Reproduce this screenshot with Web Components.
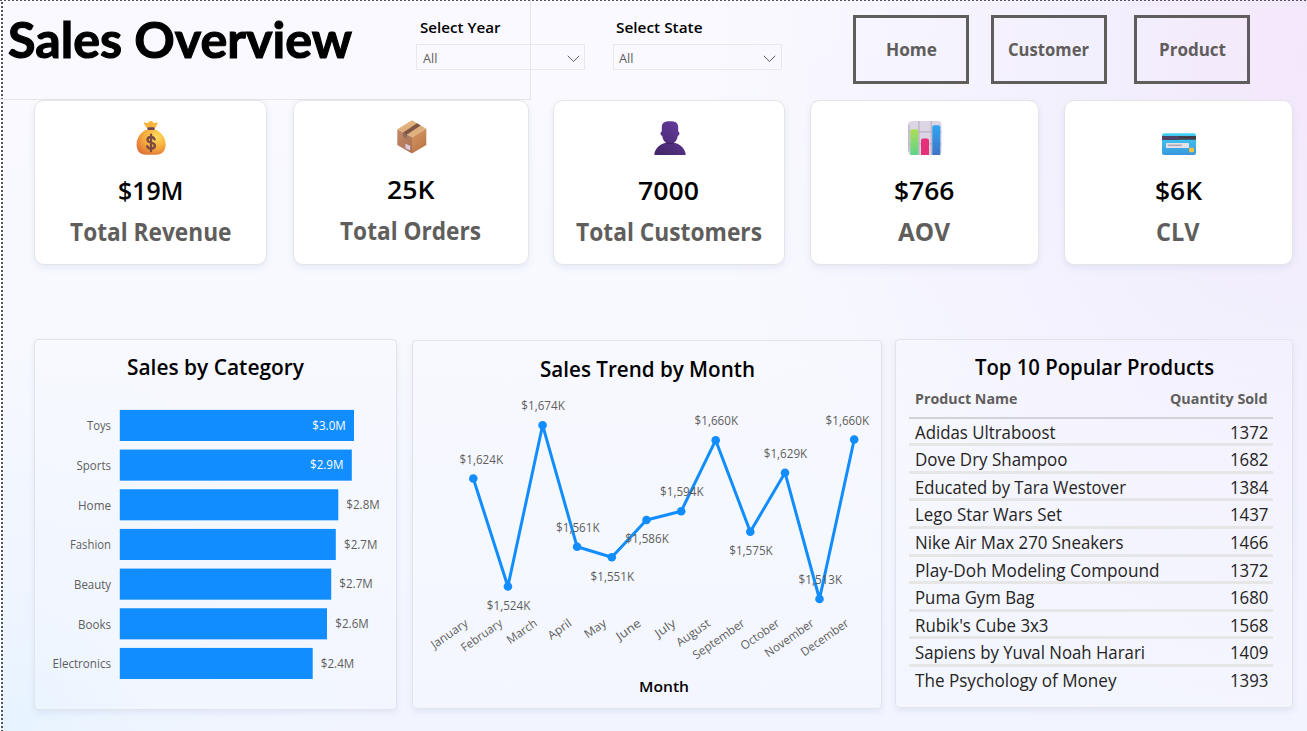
<!DOCTYPE html>
<html lang="en">
<head>
<meta charset="utf-8">
<title>Sales Overview</title>
<style>
html,body{margin:0;padding:0}
body{width:1307px;height:731px;overflow:hidden;font-family:"Open Sans","Noto Sans",sans-serif}
</style>
</head>
<body>
<sales-dashboard></sales-dashboard>
<script>
const define = (name, cls) => customElements.define(name, cls);
class Base extends HTMLElement {
  connectedCallback() {
    if (this.shadowRoot) return;
    this.attachShadow({ mode: 'open' }).innerHTML = this.render();
    if (this.ready) this.ready();
  }
  a(n, d = '') { return this.getAttribute(n) ?? d; }
}

/* One line of text condensed or expanded to a given advance width. */
define('fit-text', class extends Base {
  render() {
    return `<style>:host{display:inline-block;white-space:nowrap;width:${this.a('w')}px}
    span{display:inline-block;transform-origin:0 50%}</style><span><slot></slot></span>`;
  }
  ready() {
    const s = this.shadowRoot.querySelector('span');
    const n = s.getBoundingClientRect().width;
    if (n) s.style.transform = `scaleX(${this.a('w') / n})`;
  }
});

define('page-title', class extends Base {
  render() {
    return `<style>:host{display:block;box-sizing:border-box;width:531px;height:100px;margin-right:-115px;padding-left:7.500px;
      border-right:1px solid #e6e6e9;border-bottom:1px solid #e6e6e9;font:700 49px/60px Lato,sans-serif;-webkit-text-stroke:1.100px #000;color:#000;padding-top:9px}</style>
      <fit-text w="344"><slot></slot></fit-text>`;
  }
});

define('filter-select', class extends Base {
  render() {
    return `<style>:host{display:block;width:169px;padding-top:17px;color:#000}
    .l{font-size:15px;font-weight:600;line-height:21px;height:27px;padding-left:3.500px}
    .b{box-sizing:border-box;height:26px;border:1px solid #e9e9ec;display:flex;align-items:center;justify-content:space-between;padding:4px 4.500px 0 5.500px;
      font-size:12px;line-height:20px;color:#605e5c}
    svg{display:block;margin-top:-1px}</style>
    <div class="l"><fit-text w="${this.a('w')}"><slot></slot></fit-text></div>
    <div class="b"><fit-text w="14.5">${this.a('value')}</fit-text>
    <svg width="13" height="8" viewBox="0 0 13 8"><path d="M.8.8 6.5 6.6 12.2.8" fill="none" stroke="#605e5c" stroke-width="1"/></svg></div>`;
  }
});

define('nav-button', class extends Base {
  render() {
    return `<style>:host{display:flex;box-sizing:border-box;width:116px;height:69px;margin-top:14.5px;padding-top:2px;border:3px solid #605e5c;align-items:center;justify-content:center;
      font-size:17.3px;font-weight:700;line-height:24px;color:#605e5c}</style><fit-text w="${this.a('w')}"><slot></slot></fit-text>`;
  }
});

const ICONS = {
  bag: `<defs><radialGradient id="g" cx=".68" cy=".28" r=".85"><stop offset="0" stop-color="#ffdc5e"/><stop offset=".5" stop-color="#f7ac3c"/><stop offset="1" stop-color="#dc6c38"/></radialGradient></defs>
    <path d="M12.3 6.8 10 2.6c-.5-1 .4-1.5 1.3-1.1l2 .8L15.9.3c.7-.5 1.4-.5 2 0l2.4 2 2.2-.8c1-.3 1.7.3 1.2 1.2l-2.4 4.1z" fill="#f9b53c"/>
    <path d="M12.2 8.8C6.8 11.4 2.600 17 2.600 23.300c0 7 3.500 10.500 9.500 10.500h10c6 0 9.500-3.600 9.500-10.500 0-6.300-4.300-12-9.800-14.500z" fill="url(#g)"/>
    <rect x="13.300" y="6.200" width="7.500" height="2.800" rx="1.200" fill="#6b4548"/>
    <path d="M20.600 18.300c-.6-1.600-1.900-2.300-3.700-2.300-2.200 0-3.500 1.100-3.500 2.800 0 4.100 7.500 1.700 7.500 6 0 1.800-1.500 2.900-3.800 2.900-2 0-3.400-.9-4-2.600M17 13.700v16.600" fill="none" stroke="#7b4b43" stroke-width="2.300" stroke-linecap="round"/>`,
  box: `<defs><linearGradient id="l" x1="0" y1="0" x2="1" y2="1"><stop offset="0" stop-color="#c38a66"/><stop offset="1" stop-color="#a96f53"/></linearGradient>
    <linearGradient id="r" x1="0" y1="0" x2=".5" y2="1"><stop offset="0" stop-color="#d49c69"/><stop offset="1" stop-color="#bd7544"/></linearGradient></defs>
    <path d="M17 .2 31.300 8.800 17 17.200 2.300 9.300z" fill="#dfb27d"/><path d="M2.300 9.300 17 17.200v16.300L2.300 25z" fill="url(#l)"/><path d="M31.300 8.800 17 17.200v16.300L31.300 25z" fill="url(#r)"/>
    <path d="M22 3.200 25.800 5.500 12 14.500v4l-3.800-2.200v-3.700z" fill="#805646"/><path d="M8.200 12.600 12 14.700v4l-3.800-2.200z" fill="#8f6d5e"/>
    <path d="m10.400 23.700 4.800 2.100v4.800l-4.800-2.400z" fill="#dacde2"/>`,
  user: `<defs><linearGradient id="u" x1="0" y1="1" x2=".7" y2="0"><stop offset="0" stop-color="#412665"/><stop offset="1" stop-color="#643a9c"/></linearGradient></defs>
    <path d="M17 .3c5.600 0 8.200 1.500 8.200 6.200v4c1.700 0 1.800 4-.4 4.200-.4 3.600-2.100 6-4.100 7C27 22.500 31.800 27.300 32.700 33c.1.500-.1.900-.7.900H2c-.5 0-.8-.4-.7-.9 1-5.700 5.700-10.500 12-11.300-2-1-3.700-3.400-4.100-7-2.200-.2-2.100-4.200-.4-4.200v-4C8.800 1.800 11.400.3 17 .3z" fill="url(#u)"/>
    <path d="M13.200 21.800q3.800 1.800 7.500 0" stroke="#38205a" fill="none"/>`,
  chart: `<defs><linearGradient id="c1" x2="0" y2="1"><stop stop-color="#aede56"/><stop offset="1" stop-color="#5dd389"/></linearGradient><linearGradient id="c2" x2="0" y2="1"><stop stop-color="#2ea6f5"/><stop offset="1" stop-color="#3f72c4"/></linearGradient></defs>
    <rect x=".2" width="33.300" height="34" rx="3.800" fill="#dcd5e4"/><path d="M.2 10.800h33.300M.2 22.800h33.300M11 0v34M23.300 0v34" stroke="#b9b1c4" stroke-width="1.200"/>
    <path d="M.9 3.500v27" stroke="#bcb5c8" stroke-width="1.400"/>
    <path d="M2.300 34V10.200q0-2 2-2h4q2 0 2 2V34z" fill="url(#c1)"/><path d="M13 34V19.500q0-2 2-2h4q2 0 2 2V34z" fill="#e52f77"/><path d="M24.300 34V6.200q0-2 2-2h4q2 0 2 2V34z" fill="url(#c2)"/>`,
  card: `<defs><linearGradient id="k" x2="0" y2="1"><stop stop-color="#42d0f3"/><stop offset="1" stop-color="#3897de"/></linearGradient></defs>
    <rect y="12.300" width="34" height="21.700" rx="2.200" fill="url(#k)"/><path d="M0 15h34v3.800H0z" fill="#413d49"/><path d="M0 15h17v3.800H0z" fill="#4f4263"/>
    <rect x="4" y="22" width="23" height="5" rx=".6" fill="#e3e0e8"/><path d="M5.800 24.300h14" stroke="#aaa5b2" stroke-width="1.500"/><rect x="27.200" y="26.800" width="4.800" height="4.500" rx=".7" fill="#f5c239"/>`
};
define('kpi-card', class extends Base {
  render() {
    return `<style>:host{display:flex;flex-direction:column;align-items:center;box-sizing:border-box;height:165px;background:#fff;border:1px solid #e5e5e8;border-radius:10px;
      box-shadow:0 3px 6px rgba(80,110,160,.10);padding-top:20px}
    svg{display:block;width:34px;height:34px;margin-left:2px;transform:translateY(${this.a('iy', '0')}px)}
    .v{margin-top:17px;font-size:25.500px;font-weight:550;line-height:36px;color:#000}
    .l{margin-top:6px;font-size:24.300px;font-weight:700;line-height:36px;color:#605e5c}
    .v,.l{transform:translateY(${this.a('ty', '0')}px)}</style>
    <svg viewBox="0 0 34 34">${ICONS[this.a('icon')]}</svg>
    <div class="v"><fit-text w="${this.a('vw')}">${this.a('value')}</fit-text></div>
    <div class="l"><fit-text w="${this.a('lw')}">${this.a('label')}</fit-text></div>`;
  }
});

define('chart-panel', class extends Base {
  render() {
    return `<style>:host{display:block;box-sizing:border-box;border:1px solid #e3e4e8;border-radius:4px;box-shadow:0 3px 6px rgba(80,110,160,.10);background:rgba(255,255,255,.12)}
    h2{margin:0;height:33px;padding-top:${this.a('ht', '11')}px;box-sizing:content-box;text-align:center;font-size:21.500px;font-weight:570;line-height:32px;color:#000}</style>
    <h2><fit-text w="${this.a('tw')}">${this.a('heading')}</fit-text></h2><slot></slot>`;
  }
});

const T = (s, x, y, w, anchor = 'start', extra = '') =>
  `<text x="${x}" y="${y}" textLength="${w}" lengthAdjust="spacingAndGlyphs" text-anchor="${anchor}" ${extra}>${s}</text>`;
const SVGCSS = `<style>:host{display:block}svg{display:block;overflow:visible}text{font:400 11.800px "Open Sans","Noto Sans",sans-serif;fill:#605e5c}text.in{fill:#fff}text.ax{font-size:15px;font-weight:600;fill:#000}</style>`;

define('bar-chart', class extends Base {
  render() {
    const rows = [['Toys',24,354,'$3.0M',312.300,1],['Sports',34.500,351.800,'$2.9M',310,1],['Home',33,338.300,'$2.8M',346.300],['Fashion',41,335.800,'$2.7M',344],
      ['Beauty',37,331.200,'$2.7M',339.300],['Books',33,327,'$2.6M',335.300],['Electronics',58.500,312.700,'$2.4M',320.800]];
    return SVGCSS + `<svg width="360" height="310" viewBox="35 384 360 310">` + rows.map(([n, w, e, v, vx, inside], i) => {
      const y = 410 + i * 39.670;
      return `<rect x="119.800" y="${y - .1}" width="${e - 119.800}" height="31.100" fill="#118dff"/>` + T(n, 111, Math.round(y + 20.200), w, 'end') +
        T(v, vx, Math.round(y + 19.700), 33.500, 'start', inside ? 'class="in"' : '');
    }).join('') + '</svg>';
  }
});

define('line-chart', class extends Base {
  render() {
    const p = [['January',42,473.300,478.500,'$1,624K',481,464],['February',47.500,507.900,586.500,'$1,524K',508.300,610],['March',34,542.600,425.200,'$1,674K',542.800,410],
      ['April',26,577.100,546.800,'$1,561K',577.500,532],['May',24,611.800,557.300,'$1,551K',612,581],['June',27.500,646.500,520,'$1,586K',646.800,543],
      ['July',22.500,681.200,511.200,'$1,594K',681.500,496],['August',38.500,715.700,440.200,'$1,660K',716,425],['September',60.500,750.300,531.800,'$1,575K',750.700,555],
      ['October',44.500,785,472.700,'$1,629K',785.200,458],['November',57,819.500,599,'$1,513K',820,584],['December',55.500,854.200,439.500,'$1,660K',847,425]];
    return SVGCSS + `<svg width="468" height="320" viewBox="413 386 468 320"><polyline points="${p.map(q => q[2] + ',' + q[3]).join(' ')}" fill="none" stroke="#118dff" stroke-width="3" stroke-linejoin="round"/>` +
      p.map(q => `<circle cx="${q[2]}" cy="${q[3]}" r="4.300" fill="#118dff"/>`).join('') +
      p.map(q => T(q[4], q[5] + .3, q[6], 43.500, 'middle') + T(q[0], 0, 0, q[1], 'end', `transform="translate(${q[2] - 4.500} 625) rotate(-35)"`)).join('') +
      T('Month', 664, 692, 50, 'middle', 'class="ax"') + '</svg>';
  }
});

define('product-table', class extends Base {
  render() {
    const rows = [['Adidas Ultraboost',140.500,1372],['Dove Dry Shampoo',152.500,1682],['Educated by Tara Westover',211,1384],['Lego Star Wars Set',147,1437],['Nike Air Max 270 Sneakers',208.500,1466],
      ['Play-Doh Modeling Compound',244.500,1372],['Puma Gym Bag',119.500,1680],["Rubik's Cube 3x3",133.500,1568],['Sapiens by Yuval Noah Harari',230,1409],['The Psychology of Money',201.500,1393]];
    return `<style>:host{display:block;margin:0 19px 0 13px}
    div{display:flex;justify-content:space-between;box-sizing:border-box}
    .h{height:34.600px;padding:4px 5.500px 0;border-bottom:2px solid #d2d2d8;font-size:14.500px;font-weight:700;line-height:22px;color:#605e5c}
    .r{height:27.600px;padding:0 4.500px 0 5.500px;border-bottom:3px solid #e6e6e6;font-size:17.300px;line-height:28px;color:#252423}
    .r:last-child{border:0}</style>
    <div class="h"><fit-text w="102.500">Product Name</fit-text><fit-text w="97.500">Quantity Sold</fit-text></div>` +
      rows.map(r => `<div class="r"><fit-text w="${r[1]}">${r[0]}</fit-text><fit-text w="38.500">${r[2]}</fit-text></div>`).join('');
  }
});

define('sales-dashboard', class extends Base {
  render() {
    return `<style>
    :host{display:block;box-sizing:border-box;width:1307px;height:731px;overflow:hidden;
      background:
        repeating-linear-gradient(90deg,#55555a 0 2px,transparent 2px 4px) 0 0/100% 1px no-repeat,
        repeating-linear-gradient(180deg,transparent 0 2px,#55555a 2px 4px) 1px 0/2px 100% no-repeat,
        linear-gradient(#fff,#fff) 0 0/1px 100% no-repeat,
        radial-gradient(circle at 0 100%,rgba(230,243,255,1) 0,rgba(236,245,255,.55) 140px,rgba(240,245,255,0) 400px),
        radial-gradient(ellipse 600px 760px at 100% 8%,rgba(244,231,251,1) 0,rgba(241,237,253,.8) 35%,rgba(246,246,255,0) 100%),
        linear-gradient(180deg,#faf9ff 0,#f7f9ff 45%,#f2f5ff 100%)}
    header{display:flex;align-items:flex-start;height:100px}
    filter-select + filter-select{margin-left:27.500px}
    .kpis{display:flex;padding-left:34px;height:239px;align-items:flex-start}
    .panels{display:flex;align-items:flex-start;padding-left:34px}
    </style>
    <header>
      <page-title>Sales Overview</page-title>
      <filter-select w="80.500" value="All">Select Year</filter-select>
      <filter-select w="86.500" value="All">Select State</filter-select>
      <nav-button w="51" style="margin-left:71.500px">Home</nav-button>
      <nav-button w="81" style="margin-left:21.500px">Customer</nav-button>
      <nav-button w="67" style="margin-left:27.500px">Product</nav-button>
    </header>
    <section class="kpis">
      <kpi-card style="width:232.500px" icon="bag" value="$19M" vw="65.500" label="Total Revenue" lw="161.500"></kpi-card>
      <kpi-card style="width:236.500px;margin-left:26px" icon="box" iy="-1" ty="-1" value="25K" vw="47.500" label="Total Orders" lw="141"></kpi-card>
      <kpi-card style="width:232.500px;margin-left:23.500px" icon="user" value="7000" vw="61" label="Total Customers" lw="186"></kpi-card>
      <kpi-card style="width:229px;margin-left:24.500px" icon="chart" value="$766" vw="60.500" label="AOV" lw="52"></kpi-card>
      <kpi-card style="width:229px;margin-left:25px" icon="card" value="$6K" vw="47" label="CLV" lw="43.500"></kpi-card>
    </section>
    <section class="panels">
      <chart-panel style="width:363px;height:371px" heading="Sales by Category" tw="177"><bar-chart></bar-chart></chart-panel>
      <chart-panel style="width:470px;height:369px;margin:1px 0 0 15px" ht="12" heading="Sales Trend by Month" tw="215"><line-chart></line-chart></chart-panel>
      <chart-panel style="width:398px;height:369px;margin-left:13px" heading="Top 10 Popular Products" tw="239"><product-table></product-table></chart-panel>
    </section>`;
  }
});
</script>
</body>
</html>
